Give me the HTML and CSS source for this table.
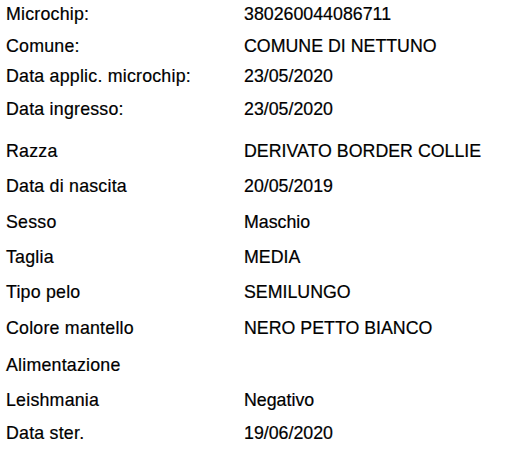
FILE: index.html
```html
<!DOCTYPE html>
<html lang="it">
<head>
  <meta charset="UTF-8"/>
  <meta name="viewport" content="width=device-width, initial-scale=1.0"/>
  <title>Scheda cane</title>
  <link rel="stylesheet" href="styles.css">
</head>
<body>
  <div class="sheet">
    <div class="row h32"><span class="label">Microchip:</span><span class="value">380260044086711</span></div>
    <div class="row h30"><span class="label">Comune:</span><span class="value">COMUNE DI NETTUNO</span></div>
    <div class="row h33"><span class="label">Data applic. microchip:</span><span class="value">23/05/2020</span></div>
    <div class="row h42"><span class="label">Data ingresso:</span><span class="value">23/05/2020</span></div>
    <div class="row"><span class="label">Razza</span><span class="value">DERIVATO BORDER COLLIE</span></div>
    <div class="row h36"><span class="label">Data di nascita</span><span class="value">20/05/2019</span></div>
    <div class="row"><span class="label">Sesso</span><span class="value">Maschio</span></div>
    <div class="row"><span class="label">Taglia</span><span class="value">MEDIA</span></div>
    <div class="row h36"><span class="label">Tipo pelo</span><span class="value">SEMILUNGO</span></div>
    <div class="row h37"><span class="label">Colore mantello</span><span class="value">NERO PETTO BIANCO</span></div>
    <div class="row"><span class="label">Alimentazione</span><span class="value"></span></div>
    <div class="row h33"><span class="label">Leishmania</span><span class="value">Negativo</span></div>
    <div class="row"><span class="label">Data ster.</span><span class="value">19/06/2020</span></div>
  </div>
</body>
</html>
```

FILE: styles.css
```css
* {
  box-sizing: border-box;
  margin: 0;
  padding: 0;
}

body {
  background: #fff;
  color: #000;
  font-family: 'Liberation Sans', Arial, sans-serif;
  font-size: 17.8px;
  line-height: 20px;
  -webkit-text-stroke: 0.2px #000;
}

.sheet {
  padding: 4px 0 0 6px;
}

.row {
  display: flex;
  height: 35px;
}

.row.h30 { height: 30px; }
.row.h32 { height: 32px; }
.row.h33 { height: 33px; }
.row.h36 { height: 36px; }
.row.h37 { height: 37px; }
.row.h42 { height: 42px; }

.label {
  width: 238px;
  flex-shrink: 0;
  letter-spacing: 0.22px;
}

.value {
  flex: 1;
}
```
